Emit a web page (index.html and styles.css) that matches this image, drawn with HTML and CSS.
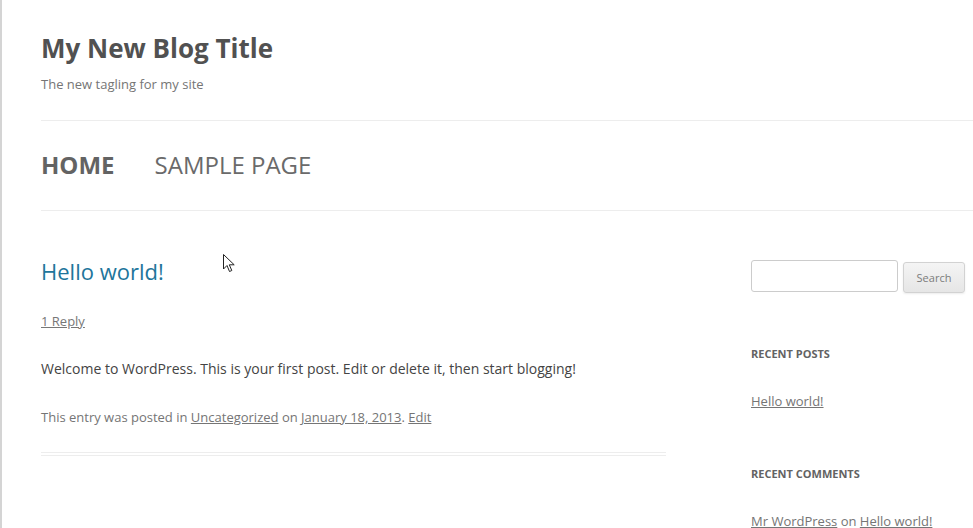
FILE: index.html
```html
<!DOCTYPE html>
<html>
<head>
<meta charset="utf-8">
<link rel="stylesheet" href="styles.css">
</head>
<body>
<div class="page">
  <header class="site-header">
    <h1 class="site-title">My New Blog Title</h1>
    <p class="site-desc">The new tagling for my site</p>
  </header>
  <nav class="main-nav">
    <a class="nav-item current" href="#">HOME</a>
    <a class="nav-item" href="#">SAMPLE PAGE</a>
  </nav>
  <div class="main">
    <article class="post">
      <h2 class="entry-title"><a href="#">Hello world!</a></h2>
      <div class="comments-link"><a href="#">1 Reply</a></div>
      <p class="entry-content">Welcome to WordPress. This is your first post. Edit or delete it, then start blogging!</p>
      <footer class="entry-meta">This entry was posted in <a href="#">Uncategorized</a> on <a href="#">January 18, 2013</a>. <a href="#">Edit</a></footer>
    </article>
    <aside class="sidebar">
      <form class="search">
        <input class="search-input" type="text">
        <button class="search-btn" type="button">Search</button>
      </form>
      <h3 class="widget-title">RECENT POSTS</h3>
      <div class="widget-line"><a href="#">Hello world!</a></div>
      <h3 class="widget-title">RECENT COMMENTS</h3>
      <div class="widget-line"><a href="#">Mr WordPress</a> on <a href="#">Hello world!</a></div>
    </aside>
  </div>
  <svg class="cursor" width="13" height="20" viewBox="0 0 13 20"><path d="M0.5 0.5 L0.5 15 L4 11.5 L6.5 17.5 L8.8 16.5 L6.3 10.8 L11.2 10.8 Z" fill="#fff" stroke="#222" stroke-width="1"/></svg>
</div>
</body>
</html>
```

FILE: styles.css
```css
html, body {
  margin: 0;
  padding: 0;
  background: #fff;
}
body {
  font-family: "Open Sans", "Liberation Sans", sans-serif;
  color: #444;
  border-left: 2px solid #d4d4d4;
  min-height: 528px;
  box-sizing: border-box;
  overflow: hidden;
}
.page {
  position: relative;
  padding-left: 39px;
}
a { color: inherit; }
.site-header {
  padding-top: 30px;
  padding-bottom: 24px;
  border-bottom: 1px solid #ededed;
}
.site-title {
  margin: 0;
  font-size: 26px;
  line-height: 36px;
  font-weight: 700;
  color: #515151;
}
.site-desc {
  margin: 6px 0 0;
  font-size: 13px;
  line-height: 24px;
  color: #757575;
}
.main-nav {
  display: flex;
  gap: 40px;
  height: 89px;
  align-items: center;
  padding-bottom: 0;
  border-bottom: 1px solid #ededed;
}
.nav-item {
  font-size: 24px;
  line-height: 32px;
  margin-top: -2px;
  text-decoration: none;
  color: #6a6a6a;
}
.nav-item.current {
  font-weight: 700;
  color: #636363;
}
.main {
  display: flex;
  padding-top: 46px;
}
.post {
  width: 625px;
  flex: none;
  border-bottom: 4px double #ededed;
  padding-bottom: 25px;
  align-self: flex-start;
}
.entry-title {
  margin: 0;
  font-size: 22px;
  line-height: 28px;
  font-weight: 400;
}
.entry-title a {
  color: #21759b;
  text-decoration: none;
}
.comments-link {
  margin-top: 26px;
  font-size: 13px;
  line-height: 20px;
  color: #777;
}
.entry-content {
  margin: 28px 0 0;
  font-size: 14px;
  line-height: 20px;
  color: #444;
}
.entry-meta {
  margin-top: 28px;
  font-size: 13px;
  line-height: 20px;
  color: #757575;
}
.sidebar {
  margin-left: 85px;
  flex: none;
  width: 230px;
  padding-top: 3px;
}
.search {
  display: flex;
  align-items: flex-start;
  gap: 5px;
  margin: 0;
}
.search-input {
  width: 147px;
  height: 32px;
  box-sizing: border-box;
  border: 1px solid #ccc;
  border-radius: 3px;
  padding: 0;
  margin: 0;
}
.search-btn {
  margin-top: 2px;
  width: 62px;
  height: 31px;
  border: 1px solid #d2d2d2;
  border-radius: 3px;
  background: linear-gradient(#f4f4f4, #e6e6e6);
  box-shadow: 0 1px 2px rgba(64,64,64,0.1);
  font-family: "Open Sans", "Liberation Sans", sans-serif;
  font-size: 11px;
  color: #7c7c7c;
  padding: 0;
}
.widget-title {
  margin: 54px 0 0;
  font-size: 11px;
  line-height: 14px;
  font-weight: 700;
  color: #636363;
}
.widget-title + .widget-line + .widget-title {
  margin-top: 56px;
}
.widget-line {
  margin-top: 30px;
  font-size: 13px;
  line-height: 20px;
  color: #757575;
}
.cursor {
  position: absolute;
  left: 221px;
  top: 254px;
}
```
